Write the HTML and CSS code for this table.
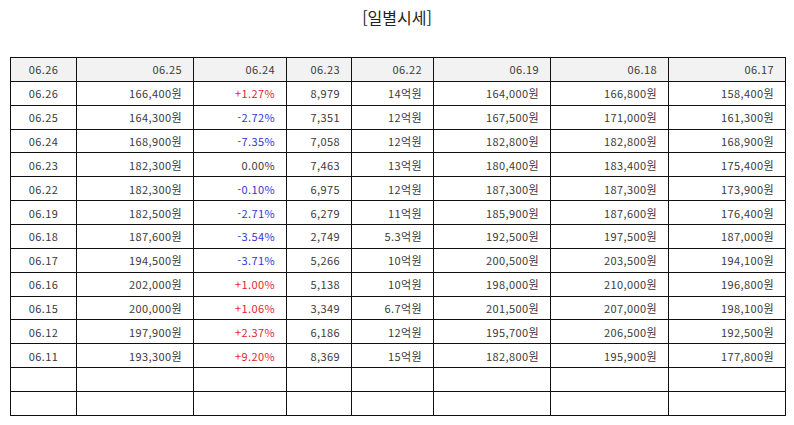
FILE: index.html
```html
<!DOCTYPE html>
<html lang="ko">
<head>
<meta charset="utf-8">
<title>일별시세</title>
<link rel="stylesheet" href="styles.css">
</head>
<body>
<h1 class="title">[일별시세]</h1>
<table class="prices">
<colgroup>
<col class="c1"><col class="c2"><col class="c3"><col class="c4"><col class="c5"><col class="c6"><col class="c7"><col class="c8">
</colgroup>
<thead>
<tr><th>06.26</th><th>06.25</th><th>06.24</th><th>06.23</th><th>06.22</th><th>06.19</th><th>06.18</th><th>06.17</th></tr>
</thead>
<tbody>
<tr><td>06.26</td><td>166,400원</td><td class="up">+1.27%</td><td>8,979</td><td>14억원</td><td>164,000원</td><td>166,800원</td><td>158,400원</td></tr>
<tr><td>06.25</td><td>164,300원</td><td class="down">-2.72%</td><td>7,351</td><td>12억원</td><td>167,500원</td><td>171,000원</td><td>161,300원</td></tr>
<tr><td>06.24</td><td>168,900원</td><td class="down">-7.35%</td><td>7,058</td><td>12억원</td><td>182,800원</td><td>182,800원</td><td>168,900원</td></tr>
<tr><td>06.23</td><td>182,300원</td><td>0.00%</td><td>7,463</td><td>13억원</td><td>180,400원</td><td>183,400원</td><td>175,400원</td></tr>
<tr><td>06.22</td><td>182,300원</td><td class="down">-0.10%</td><td>6,975</td><td>12억원</td><td>187,300원</td><td>187,300원</td><td>173,900원</td></tr>
<tr><td>06.19</td><td>182,500원</td><td class="down">-2.71%</td><td>6,279</td><td>11억원</td><td>185,900원</td><td>187,600원</td><td>176,400원</td></tr>
<tr><td>06.18</td><td>187,600원</td><td class="down">-3.54%</td><td>2,749</td><td>5.3억원</td><td>192,500원</td><td>197,500원</td><td>187,000원</td></tr>
<tr><td>06.17</td><td>194,500원</td><td class="down">-3.71%</td><td>5,266</td><td>10억원</td><td>200,500원</td><td>203,500원</td><td>194,100원</td></tr>
<tr><td>06.16</td><td>202,000원</td><td class="up">+1.00%</td><td>5,138</td><td>10억원</td><td>198,000원</td><td>210,000원</td><td>196,800원</td></tr>
<tr><td>06.15</td><td>200,000원</td><td class="up">+1.06%</td><td>3,349</td><td>6.7억원</td><td>201,500원</td><td>207,000원</td><td>198,100원</td></tr>
<tr><td>06.12</td><td>197,900원</td><td class="up">+2.37%</td><td>6,186</td><td>12억원</td><td>195,700원</td><td>206,500원</td><td>192,500원</td></tr>
<tr><td>06.11</td><td>193,300원</td><td class="up">+9.20%</td><td>8,369</td><td>15억원</td><td>182,800원</td><td>195,900원</td><td>177,800원</td></tr>
<tr><td></td><td></td><td></td><td></td><td></td><td></td><td></td><td></td></tr>
<tr><td></td><td></td><td></td><td></td><td></td><td></td><td></td><td></td></tr>
</tbody>
</table>
</body>
</html>
```
FILE: styles.css
```css
html, body {
  margin: 0;
  padding: 0;
  background: #fff;
}
body {
  font-family: "Noto Sans CJK KR", "DejaVu Sans", sans-serif;
  color: #333;
}
.title {
  margin: 0;
  padding-top: 6px;
  height: 57px;
  box-sizing: border-box;
  text-align: center;
  font-size: 16px;
  font-weight: normal;
  line-height: 22px;
  color: #222;
}
.prices {
  margin-left: 10px;
  width: 775px;
  table-layout: fixed;
  border-collapse: collapse;
  font-size: 11px;
  letter-spacing: 0.4px;
}
.c1 { width: 66px; }
.c2 { width: 117px; }
.c3 { width: 93px; }
.c4 { width: 65px; }
.c5 { width: 82px; }
.c6 { width: 117px; }
.c7 { width: 118px; }
.c8 { width: 117px; }
.prices th,
.prices td {
  border: 1px solid #111;
  height: 22.87px;
  padding: 0 11px 0 4px;
  text-align: right;
  font-weight: normal;
  line-height: 14px;
  color: #3a3a3a;
  white-space: nowrap;
}
.prices th {
  background: #f2f2f2;
}
.prices th:first-child,
.prices td:first-child {
  text-align: center;
  padding: 0;
}
.prices td.up { color: #e0262e; }
.prices td.down { color: #3434d6; }
```
